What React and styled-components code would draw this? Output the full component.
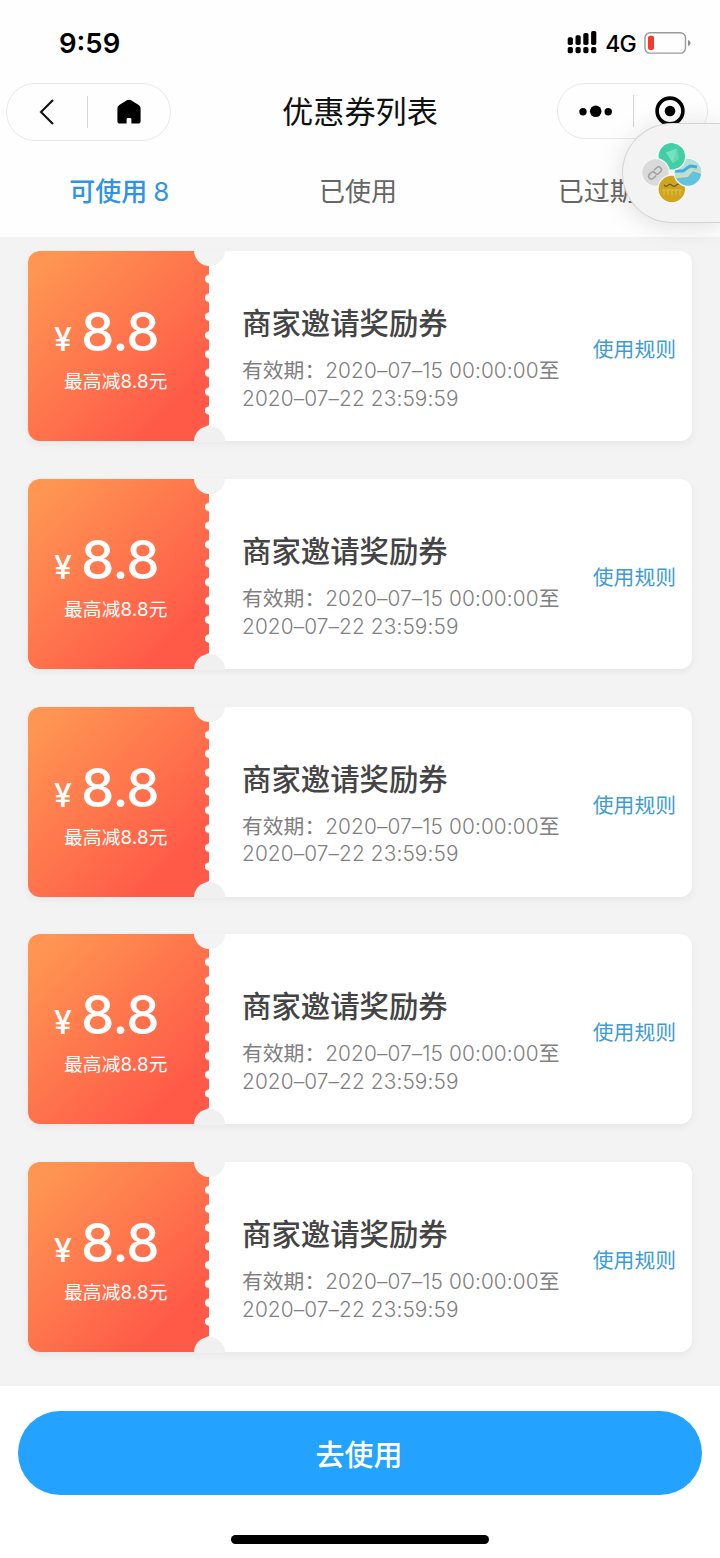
import React from "react";
import styled, { createGlobalStyle } from "styled-components";

const tabs = [
  { nama: "可使用", total: 8, active: true },
  { nama: "已使用" },
  { nama: "已过期" },
];

const coupons = [1, 2, 3, 4, 5].map(id => ({
  id,
  amount: "8.8",
  limit: "最高减8.8元",
  title: "商家邀请奖励券",
  start: "2020–07–15 00:00:00",
  end: "2020–07–22 23:59:59",
}));

const SignalIcon = () => (
  <svg width="30" height="24" viewBox="0 0 30 24">
    {[0, 1, 2, 3].map(i => (
      <g key={i}>
        <rect
          x={0.7 + i * 7.8}
          y={6.3 - i * 2.1}
          width="5.2"
          height={7.6 + i * 2.1}
          rx="1.7"
        />
        <rect x={0.7 + i * 7.8} y="16" width="5.2" height="6.2" rx="1.8" />
      </g>
    ))}
  </svg>
);

const BatteryIcon = () => (
  <svg width="48" height="24" viewBox="0 0 48 24">
    <rect
      x="1"
      y="1.7"
      width="40.5"
      height="20.4"
      rx="5"
      fill="none"
      stroke="#9a9a9a"
      strokeWidth="1.4"
    />
    <rect x="4" y="4.7" width="6" height="14.4" rx="2" fill="#f8382f" />
    <path d="M44 9 q2.6 1 2.6 3 t-2.6 3z" fill="#8c8c8c" />
  </svg>
);

const BackIcon = () => (
  <svg width="16" height="28" viewBox="0 0 16 28">
    <path d="M14 2 L2 14 L14 26" fill="none" stroke="#111" strokeWidth="2.1" />
  </svg>
);

const HomeIcon = () => (
  <svg width="26" height="26" viewBox="0 0 26 26">
    <path d="M10.9 1.3 Q13 0.1 15.1 1.3 L22.7 6.1 Q24.6 7.3 24.6 9.6 V22 Q24.6 24.6 22 24.6 H15.4 V20.4 Q15.4 19 14 19 H12 Q10.6 19 10.6 20.4 V24.6 H4 Q1.4 24.6 1.4 22 V9.6 Q1.4 7.3 3.3 6.1 Z" />
  </svg>
);

const MoreIcon = () => (
  <svg width="34" height="14" viewBox="0 0 34 14">
    <circle cx="5" cy="7.7" r="3.7" />
    <circle cx="17.7" cy="7.3" r="5.8" />
    <circle cx="30.2" cy="7.7" r="3.7" />
  </svg>
);

const CloseIcon = () => (
  <svg width="30" height="30" viewBox="0 0 30 30">
    <circle cx="15" cy="15" r="12.9" fill="none" stroke="#000" strokeWidth="3.6" />
    <circle cx="15" cy="15" r="5.3" />
  </svg>
);

const GreenDisc = () => (
  <>
    <circle cx="31.8" cy="15.3" r="14.5" fill="#f7f7f7" />
    <circle cx="31.8" cy="15.3" r="13.2" fill="#43cfa5" />
    <path d="M26 11.5 L37 7.5 L39 18 L33 22 Z" fill="#62d8b4" />
    <path d="M26 11.5 L37 7.5 L33 22 Z" fill="#79dfc1" />
  </>
);

// four discs, each one lying over its neighbour like a pinwheel
const FloatIcon = () => (
  <svg width="64" height="64" viewBox="0 0 64 64">
    <defs>
      <clipPath id="map">
        <circle cx="48" cy="31.5" r="13.2" />
      </clipPath>
      <clipPath id="right">
        <rect x="33" y="0" width="31" height="34" />
      </clipPath>
    </defs>
    <GreenDisc />
    <circle cx="15.5" cy="31.5" r="14.5" fill="#f7f7f7" />
    <circle cx="15.5" cy="31.5" r="13.2" fill="#dadadb" />
    <g
      transform="translate(15 32) rotate(-42)"
      fill="none"
      stroke="#a0a0a3"
      strokeWidth="1.5"
      strokeLinecap="round"
    >
      <path d="M-1.5 2.8 H-4.8 A2.8 2.8 0 0 1 -4.8 -2.8 H-2 Q0 -2.8 0 -0.8 V0.8 Q0 2.8 2 2.8 H4.8 A2.8 2.8 0 0 0 4.8 -2.8 H1.8" />
    </g>
    <circle cx="31.8" cy="48" r="14.5" fill="#f7f7f7" />
    <circle cx="31.8" cy="48" r="13.2" fill="#d0a41c" />
    <path
      d="M24 44 q2 2.4 4 0.4 t4 0 t4 0 t3 -1"
      fill="none"
      stroke="#66601c"
      strokeWidth="1.3"
    />
    <path
      d="M22 49 h20 M24 49 v5 M28 48 v6 M32 49 v5 M36 48 v6 M40 49 v5"
      stroke="#e0c35c"
      strokeWidth="0.9"
    />
    <circle cx="48" cy="31.5" r="14.5" fill="#f7f7f7" />
    <g clipPath="url(#map)">
      <rect x="34" y="18" width="28" height="28" fill="#62c3df" />
      <path d="M34 18 H62 V31 L54 28 L48 36 L34 37 Z" fill="#b5e0d8" />
      <path
        d="M35 30 H43 L50 25 L57 26"
        fill="none"
        stroke="#45addb"
        strokeWidth="3"
      />
      <path
        d="M34 36 L46 35 L53 29 L62 32"
        fill="none"
        stroke="#d9dcb2"
        strokeWidth="2"
      />
    </g>
    <g clipPath="url(#right)">
      <GreenDisc />
    </g>
  </svg>
);

const Coupon = ({ data }) => (
  <CouponCard>
    <Stub>
      <Price>
        <span>¥</span>
        <b>{data.amount}</b>
      </Price>
      <Limit>{data.limit}</Limit>
    </Stub>
    <Detail>
      <CouponTitle>{data.title}</CouponTitle>
      <Period>
        有效期：<span>{data.start}</span>至
        <br />
        <span>{data.end}</span>
      </Period>
    </Detail>
    <RuleLink>使用规则</RuleLink>
  </CouponCard>
);

const App = () => (
  <Page>
    <GlobalStyle />
    <Header>
      <StatusBar>
        <Time>9:59</Time>
        <SignalIcon />
        <Network>4G</Network>
        <BatteryIcon />
      </StatusBar>
      <NavBar>
        <Capsule $width={165} $height={58}>
          <CapsuleItem $width={80}>
            <BackIcon />
          </CapsuleItem>
          <CapsuleItem $width={83}>
            <HomeIcon />
          </CapsuleItem>
        </Capsule>
        <h1>优惠券列表</h1>
        <Capsule $width={151} $height={56}>
          <CapsuleItem $width={75}>
            <MoreIcon />
          </CapsuleItem>
          <CapsuleItem $width={74}>
            <CloseIcon />
          </CapsuleItem>
        </Capsule>
      </NavBar>
      <TabBar>
        {tabs.map(tab => (
          <Tab key={tab.nama} $active={tab.active}>
            {tab.nama}
            {tab.total && <span>{tab.total}</span>}
          </Tab>
        ))}
      </TabBar>
      <FloatButton>
        <FloatIcon />
      </FloatButton>
    </Header>
    <CouponList>
      {coupons.map(coupon => (
        <Coupon key={coupon.id} data={coupon} />
      ))}
    </CouponList>
    <Footer>
      <UseButton>去使用</UseButton>
      <HomeIndicator />
    </Footer>
  </Page>
);

const GlobalStyle = createGlobalStyle`
  * {
    box-sizing: border-box;
  }
  body {
    margin: 0;
    background: #fff;
    font-family: Inter, "Noto Sans CJK SC", sans-serif;
  }
  svg {
    display: block;
    flex: none;
  }
`;

const Page = styled.div`
  width: 720px;
  height: 1558px;
  display: flex;
  flex-direction: column;
  overflow: hidden;
`;

const Header = styled.header`
  position: relative;
  z-index: 1;
  height: 237px;
  background: #fefefe;
`;

const StatusBar = styled.div`
  height: 83px;
  padding: 3px 28px 0 59px;
  display: flex;
  align-items: center;
`;

const Time = styled.div`
  flex: 1;
  font-size: 27.5px;
  font-weight: 600;
`;

const Network = styled.div`
  margin: 0 8px 0 8px;
  padding-top: 1px;
  font-size: 23px;
  font-weight: 500;
  letter-spacing: -0.8px;
`;

const NavBar = styled.div`
  height: 58px;
  padding: 0 12px 0 6px;
  display: flex;
  align-items: flex-start;
  justify-content: space-between;

  h1 {
    margin: 0 0 0 -8px;
    font-size: 31.2px;
    font-weight: 400;
    line-height: 58px;
    color: #111;
  }
`;

const Capsule = styled.div`
  display: flex;
  align-items: center;
  width: ${props => props.$width}px;
  height: ${props => props.$height}px;
  border: 1px solid #e9e9e9;
  border-radius: 29px;
`;

const CapsuleItem = styled.div`
  display: flex;
  align-items: center;
  justify-content: center;
  width: ${props => props.$width}px;
  height: 32px;

  & + & {
    border-left: 1px solid #d5d5d5;
  }
`;

const TabBar = styled.div`
  display: flex;
  height: 96px;
  padding-right: 4px;
`;

const Tab = styled.div`
  flex: 1;
  display: flex;
  justify-content: center;
  font-size: 26px;
  line-height: 101px;
  color: ${props => (props.$active ? "#2f94e6" : "#666")};
  font-weight: ${props => (props.$active ? 500 : 400)};

  span {
    margin-left: 6px;
    font-weight: 400;
  }
`;

const FloatButton = styled.div`
  position: absolute;
  top: 123px;
  right: -2px;
  width: 100px;
  height: 100px;
  padding: 17px 0 0 17px;
  background: #f3f3f3;
  border: 1px solid #d3d3d3;
  border-right: none;
  border-radius: 50px 0 0 50px;
  box-shadow: 0 3px 26px rgba(0, 0, 0, 0.13);
`;

const CouponList = styled.main`
  height: 1149px;
  padding: 14px 28px 0;
  display: flex;
  flex-direction: column;
  gap: 37.8px;
  background: #f3f3f3;
`;

const CouponCard = styled.section`
  position: relative;
  flex: none;
  height: 190px;
  display: flex;
  background: #fff;
  border-radius: 12px;
  box-shadow: 0 3px 8px rgba(0, 0, 0, 0.05);

  /* half-round notches where the stub tears off */
  &::before,
  &::after {
    content: "";
    position: absolute;
    left: 166px;
    width: 31px;
    height: 16px;
    background: #f3f3f3;
  }
  &::before {
    top: -1px;
    border-radius: 0 0 16px 16px;
  }
  &::after {
    bottom: -1px;
    border-radius: 16px 16px 0 0;
    background: #f0f0f0;
  }
`;

const Stub = styled.div`
  width: 181px;
  padding-top: 50px;
  color: #fff;
  border-radius: 12px 0 0 12px;
  background:
    radial-gradient(circle at 100% 50%, #fff 3.8px, transparent 4.4px) right
      18.6px / 5px 18.8px repeat-y,
    linear-gradient(135deg, #ff9552 8%, #ff5a48 82%);
`;

const Price = styled.div`
  height: 65px;
  padding-left: 26px;
  display: flex;
  align-items: baseline;
  line-height: 63px;

  span {
    width: 27px;
    font-size: 32px;
    font-weight: 500;
  }
  b {
    font-size: 53px;
    font-weight: 500;
    letter-spacing: -0.8px;
  }
`;

const Limit = styled.div`
  padding-left: 36px;
  font-size: 18.7px;
  line-height: 32px;
  letter-spacing: 0.15px;
`;

const Detail = styled.div`
  flex: 1;
  padding: 52px 0 0 33px;
`;

const CouponTitle = styled.h2`
  margin: 0 0 12px;
  font-size: 29.4px;
  font-weight: 500;
  line-height: 42px;
  color: #444;
`;

const Period = styled.p`
  margin: 0;
  font-size: 20.8px;
  line-height: 27.8px;
  color: #808080;
  white-space: nowrap;

  span {
    font-weight: 300;
    letter-spacing: 0.12px;
  }
`;

const RuleLink = styled.a`
  padding: 85px 16px 0 0;
  font-size: 20.8px;
  line-height: 28px;
  color: #3d9cd2;
`;

const Footer = styled.footer`
  height: 172px;
  padding: 25px 18px 0;
  display: flex;
  flex-direction: column;
  align-items: center;
`;

const UseButton = styled.button`
  width: 100%;
  height: 84px;
  padding: 0 2px 0 0;
  border: none;
  border-radius: 42px;
  background: #23a2ff;
  color: #fff;
  font-family: inherit;
  font-size: 29px;
  font-weight: 500;
`;

const HomeIndicator = styled.div`
  width: 258px;
  height: 9px;
  margin-top: 40px;
  border-radius: 5px;
  background: #000;
`;

export default App;
